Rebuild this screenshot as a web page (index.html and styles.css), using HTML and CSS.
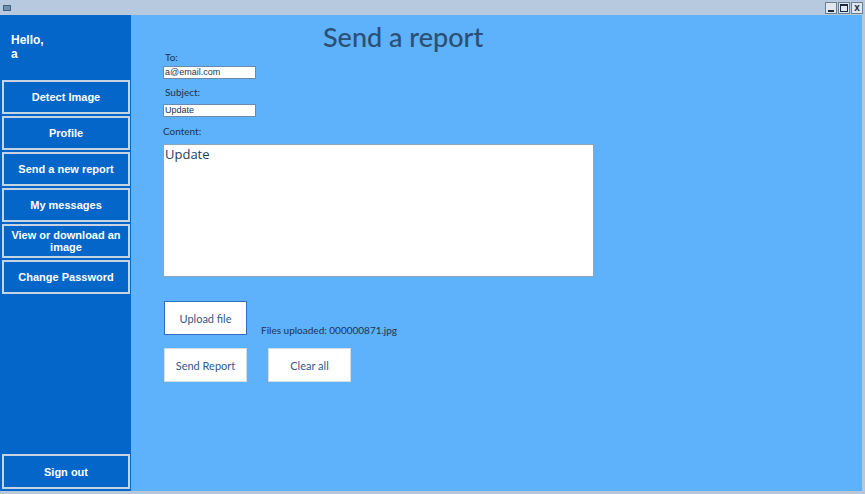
FILE: index.html
```html
<!DOCTYPE html>
<html>
<head>
<meta charset="utf-8">
<link rel="stylesheet" href="styles.css">
</head>
<body>
<div class="window">
  <div class="titlebar">
    <div class="app-icon"></div>
    <div class="spacer"></div>
    <div class="ctrl"><span class="min"></span></div>
    <div class="ctrl"><span class="max"></span></div>
    <div class="ctrl close">x</div>
  </div>
  <div class="body">
    <aside class="sidebar">
      <div class="hello">Hello,<br>a</div>
      <div class="nav">
        <div class="nav-btn">Detect Image</div>
        <div class="nav-btn">Profile</div>
        <div class="nav-btn">Send a new report</div>
        <div class="nav-btn">My messages</div>
        <div class="nav-btn">View or download an image</div>
        <div class="nav-btn">Change Password</div>
      </div>
      <div class="nav-btn signout">Sign out</div>
    </aside>
    <main class="main">
      <h1 class="title">Send a report</h1>
      <div class="form">
        <div class="label lbl-to">To:</div>
        <div class="input">a@email.com</div>
        <div class="label lbl-subject">Subject:</div>
        <div class="input">Update</div>
        <div class="label lbl-content">Content:</div>
        <div class="textarea">Update</div>
        <div class="upload-row">
          <div class="btn focused">Upload file</div>
          <div class="files">Files uploaded: 000000871.jpg</div>
        </div>
        <div class="action-row">
          <div class="btn">Send Report</div>
          <div class="btn">Clear all</div>
        </div>
      </div>
    </main>
    <div class="rborder"></div>
  </div>
  <div class="bottombar"></div>
</div>
</body>
</html>
```
FILE: styles.css
```css
* { box-sizing: border-box; }
html, body { margin: 0; padding: 0; }
body {
  width: 865px;
  height: 494px;
  overflow: hidden;
  font-family: "Liberation Sans", Arial, sans-serif;
  background: #b7c6d8;
}
.window { display: flex; flex-direction: column; height: 494px; }
.titlebar {
  height: 15px;
  background: #b6c9de;
  display: flex;
  align-items: center;
  padding: 0 2px 0 3px;
}
.app-icon {
  width: 8px; height: 6px;
  background: #6f8fae;
  border: 1px solid #41607f;
}
.spacer { flex: 1; }
.ctrl {
  width: 12px; height: 12px;
  background: #dfe7ef;
  border: 1px solid #6c7f95;
  margin-left: 1px;
  display: flex; align-items: center; justify-content: center;
  font: bold 10px/1 "Liberation Sans", sans-serif;
  color: #1b2b3d;
}
.ctrl .min { width: 6px; height: 2px; background: #1b2b3d; margin-top: 6px; }
.ctrl .max { width: 8px; height: 8px; border: 1px solid #1b2b3d; border-top-width: 2px; }
.body { flex: 1; display: flex; min-height: 0; }
.sidebar {
  width: 131px;
  background: #0466c8;
  display: flex;
  flex-direction: column;
  padding: 0 1px 2px 2px;
}
.hello {
  color: #fff;
  font-size: 12px;
  font-weight: bold;
  line-height: 14px;
  padding: 18px 0 0 9px;
  height: 65px;
}
.nav { display: flex; flex-direction: column; gap: 2px; flex: 1; }
.nav-btn {
  height: 34px;
  border: 2px solid #c6d3e2;
  color: #fff;
  font-size: 11px;
  font-weight: bold;
  line-height: 12px;
  display: flex; align-items: center; justify-content: center;
  text-align: center;
  padding: 0 2px;
}
.signout { height: 35px; }
.main {
  flex: 1;
  background: #5eb1fb;
  padding-left: 32px;
}
.title {
  margin: 8px 0 0 160px;
  font-family: Lato, "Liberation Sans", sans-serif;
  font-weight: 500;
  font-size: 27px;
  line-height: 28px;
  color: #2c4f74;
  height: 28px;
}
.form { display: flex; flex-direction: column; align-items: flex-start; }
.label {
  font-family: Lato, "Liberation Sans", sans-serif;
  font-size: 10px;
  color: #1d3350;
  line-height: 12px;
}
.lbl-to { margin: 0 0 3px 2px; }
.lbl-subject { margin: 7px 0 6px 2px; }
.lbl-content { margin: 8px 0 7px 0; }
.input {
  width: 93px; height: 13px;
  background: #fff;
  border: 1px solid #6a8bb0;
  font-size: 9px;
  line-height: 11px;
  color: #1d3350;
  padding-left: 1px;
}
.textarea {
  width: 431px; height: 133px;
  background: #fff;
  border: 1px solid #8fa4bd;
  font-family: "Open Sans", "Liberation Sans", sans-serif;
  font-size: 13px;
  line-height: 16px;
  color: #1f3c66;
  padding: 1px 1px;
}
.upload-row { display: flex; align-items: flex-end; margin-top: 24px; margin-left: 1px; }
.action-row { display: flex; gap: 21px; margin-top: 13px; margin-left: 1px; }
.btn {
  width: 83px; height: 34px;
  background: #fff;
  border: 1px solid #d6dde6;
  font-family: Lato, "Liberation Sans", sans-serif;
  font-size: 11px;
  color: #2f5a8a;
  display: flex; align-items: center; justify-content: center;
}
.btn.focused { width: 83px; border: 1px solid #2d6ec0; }
.files {
  font-family: Lato, "Liberation Sans", sans-serif;
  font-size: 10px;
  color: #1d3350;
  margin-left: 14px;
  margin-bottom: -1px;
}
.rborder { width: 3px; background: #b7c6d8; }
.bottombar { height: 3px; background: #b7c6d8; }
```
